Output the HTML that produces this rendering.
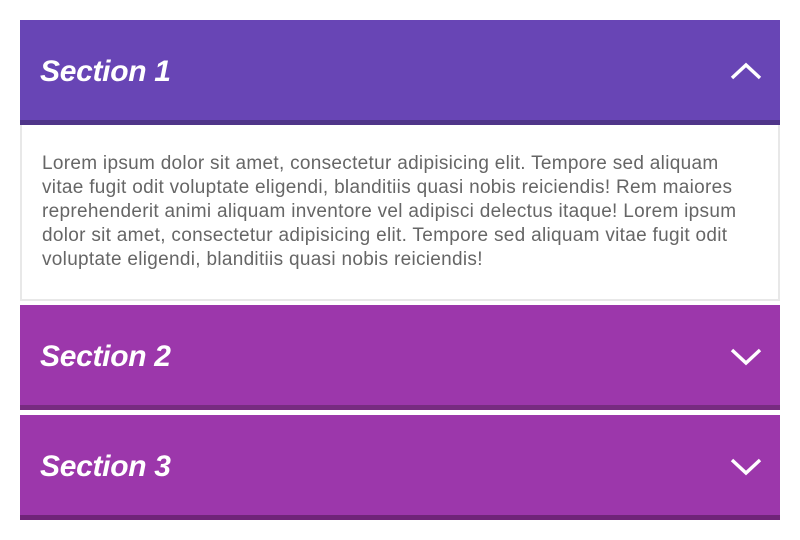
<!DOCTYPE html>
<html><head><style>
body{margin:0;background:#fff;width:800px;height:540px;overflow:hidden;font-family:"Liberation Sans",sans-serif}
.h{position:absolute;left:20px;width:760px;height:100px;box-sizing:border-box}
.h span{position:absolute;left:20px;top:35px;font-size:30px;font-weight:bold;font-style:italic;color:#fff;letter-spacing:-0.3px}
.h svg{position:absolute;left:709px;top:40px}
.t{position:absolute;left:20px;top:125px;width:760px;height:176px;box-sizing:border-box;border:2px solid #e8e8e8;border-top:none;padding:27px 0 0 20px;color:#666;font-size:19px;line-height:24px;letter-spacing:0.3px;white-space:nowrap}
</style></head><body>
<div class="h" style="top:20px;height:105px;background:#6845b5;border-bottom:5px solid #4f3589"><span>Section 1</span>
<svg width="34" height="24" viewBox="0 0 34 24"><path d="M3 18 L17 5 L31 18" fill="none" stroke="#fff" stroke-width="3.4"/></svg></div>
<div class="t">Lorem ipsum dolor sit amet, consectetur adipisicing elit. Tempore sed aliquam<br>vitae fugit odit voluptate eligendi, blanditiis quasi nobis reiciendis! Rem maiores<br>reprehenderit animi aliquam inventore vel adipisci delectus itaque! Lorem ipsum<br>dolor sit amet, consectetur adipisicing elit. Tempore sed aliquam vitae fugit odit<br>voluptate eligendi, blanditiis quasi nobis reiciendis!</div>
<div class="h" style="top:305px;height:105px;background:#9c37ab;border-bottom:5px solid #772b80"><span>Section 2</span>
<svg width="34" height="24" viewBox="0 0 34 24"><path d="M3 5 L17 18 L31 5" fill="none" stroke="#fff" stroke-width="3.4"/></svg></div>
<div class="h" style="top:415px;height:105px;background:#9c37ab;border-bottom:5px solid #6f2478"><span>Section 3</span>
<svg width="34" height="24" viewBox="0 0 34 24"><path d="M3 5 L17 18 L31 5" fill="none" stroke="#fff" stroke-width="3.4"/></svg></div>
</body></html>
